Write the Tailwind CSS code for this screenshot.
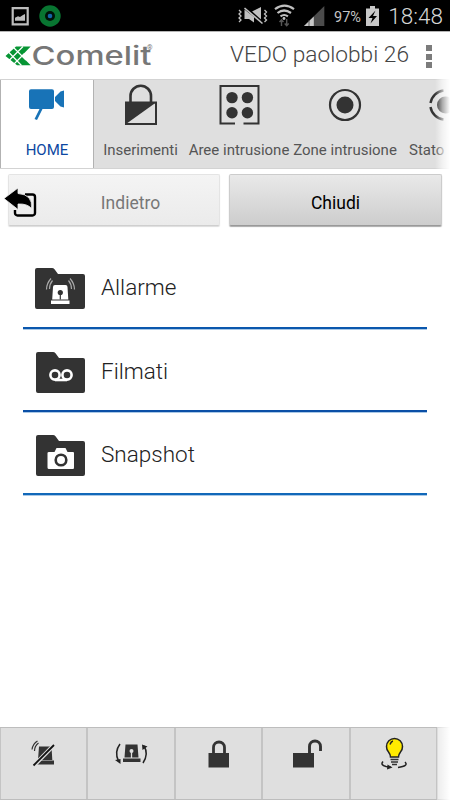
<!DOCTYPE html>
<html lang="it">
<head>
<meta charset="utf-8">
<title>Comelit</title>
<script src="https://cdn.jsdelivr.net/npm/@tailwindcss/browser@4"></script>
</head>
<body class="bg-white">
<div class="relative flex h-[800px] w-[450px] flex-col overflow-hidden bg-white font-['Roboto',sans-serif]">

  <!-- Status bar -->
  <div class="flex h-[31px] shrink-0 items-center justify-between bg-black text-[#c4c4c4]">
    <svg class="h-[31px] w-[70px]" viewBox="0 0 70 31">
      <path d="M12.7 8.2h15v16.2h-15z" fill="none" stroke="#bdbdbd" stroke-width="2.2"/>
      <path d="M15 20.8v-3l3-1.6 2 .9 3-2.1 2-1v6.800z" fill="#bdbdbd"/>
      <circle cx="50" cy="16" r="10.700" fill="#087531"/>
      <circle cx="50" cy="16" r="5" fill="#001208"/>
      <circle cx="50" cy="16" r="2.300" fill="#1565a8"/>
    </svg>
    <div class="flex h-[31px] items-center pr-[7px]">
      <svg class="h-[31px] w-[94px]" viewBox="232 0 94 31">
        <g fill="none" stroke="#c0c0c0" stroke-width="1.300">
          <path d="M239 10l2 2-2 2 2 2-2 2 2 2-2 2M264.500 10l2 2-2 2 2 2-2 2 2 2-2 2"/>
        </g>
        <path d="M244.500 9.500V19h4.500l5 3.500V17zM252 11.500l9-4.500v14z" fill="#c0c0c0"/>
        <path d="M246 7l17 15" stroke="#000" stroke-width="1.200"/>
        <path d="M244.500 8l18 15.500" stroke="#c0c0c0" stroke-width="1.600"/>
        <g fill="none" stroke="#c0c0c0" stroke-width="2.200">
          <path d="M275 9.200q9.500-7 19 0M277.500 13q6.500-5 13.500 0M280.500 16.300q3.700-2.600 7.400 0"/>
        </g>
        <circle cx="284" cy="18.500" r="1.400" fill="#c0c0c0"/>
        <path d="M281.500 26v-5.500M279.500 22l2-2.200 2 2.200M286.700 19v6M284.700 23.500l2 2.200 2-2.200" fill="none" stroke="#555" stroke-width="1.400"/>
        <path d="M304 26L324.300 6v20z" fill="#4c4c4c"/>
        <path d="M304 26l9.800-9.500V26z" fill="#c8c8c8"/>
        <path d="M309 20v6" stroke="#444" stroke-width=".8"/>
      </svg>
      <span class="w-[36px] translate-x-[8px] translate-y-[1.500px] whitespace-nowrap text-[14.500px]">97%</span>
      <svg class="h-[31px] w-[24px]" viewBox="362 0 24 31">
        <path d="M370 6h5v2.500h4V26h-13V8.500h4z" fill="#c8c8c8"/>
        <path d="M375.500 10.500l-7 7.500h4l-2 5.500 6.500-7.500h-4z" fill="#000"/>
      </svg>
      <span class="w-[57px] whitespace-nowrap translate-y-[1px] text-right text-[22.500px] font-light leading-none text-[#d6d6d6]">18:48</span>
    </div>
  </div>

  <!-- Title bar -->
  <header class="flex h-12 shrink-0 items-center border-t border-[#b5b5b5] bg-white">
    <svg class="h-[47px] w-[160px] shrink-0" viewBox="0 32 160 47">
      <path d="M16 46.500h14.700L21.500 56l9.200 9.200H17L5.500 56z" fill="#079534"/>
      <path d="M12 46l14 14M8 51.500l13.500 14M9 60.500l14-14M13.500 64.500l11-11" stroke="#fff" stroke-width="1.200"/>
      <text x="31.500" y="65" textLength="120" lengthAdjust="spacingAndGlyphs" font-family="Inter, sans-serif" font-size="26" font-weight="500" fill="#777">Comelit</text>
      <text x="147" y="49.500" font-family="Roboto, sans-serif" font-size="7" fill="#777">®</text>
    </svg>
    <div class="flex flex-1 justify-end pr-[41px] text-[22.700px] font-light text-[#444]"><h1 class="whitespace-nowrap">VEDO paolobbi 26</h1></div>
    <div class="absolute left-[426px] top-[45px] flex flex-col gap-[2.500px]">
      <i class="size-[6px] bg-[#7c7c7c]"></i><i class="size-[6px] bg-[#7c7c7c]"></i><i class="size-[6px] bg-[#7c7c7c]"></i>
    </div>
  </header>

  <!-- Tabs -->
  <nav class="relative flex h-[90px] shrink-0 overflow-hidden border-y border-[#d3d3d3] bg-[#dfdfdf] text-[15px] text-[#555]">
    <div class="-my-px flex h-[90px] w-[94px] shrink-0 flex-col items-center border border-[#b2b2b2] bg-white text-[#0c47a1]">
      <svg class="h-[58px] w-[92px]" viewBox="1 80 92 58">
        <path d="M31 89.200h21a2 2 0 0 1 2 2V107a2 2 0 0 1-2 2h-9.500l-5.500 11-2.500-1 5-10H31a2 2 0 0 1-2-2V91.200a2 2 0 0 1 2-2zM55 97l5.500-5.500L64 90.500v17l-3.500-1L55 101z" fill="#1873b7"/>
      </svg>
      <span class="leading-[24px]">HOME</span>
    </div>
    <div class="flex w-[93px] shrink-0 flex-col items-center">
      <svg class="h-[58px] w-[93px]" viewBox="94 80 93 58">
        <path d="M130.500 103V96a10 10 0 0 1 20.500 0v7" fill="none" stroke="#333" stroke-width="2.600"/>
        <path d="M126 102.500h30v21.500h-30z" fill="none" stroke="#333" stroke-width="2"/>
        <path d="M126 102.500h30l-30 21.500z" fill="#333"/>
      </svg>
      <span class="whitespace-nowrap leading-[24px]">Inserimenti</span>
    </div>
    <div class="flex w-[104px] shrink-0 flex-col items-center">
      <svg class="h-[58px] w-[104px]" viewBox="187 80 104 58">
        <path d="M235 123.500h-14.500V86h38v37.500H243.500" fill="none" stroke="#333" stroke-width="2"/>
        <g fill="#333"><circle cx="232" cy="97.600" r="5.700"/><circle cx="247.400" cy="97.600" r="5.700"/><circle cx="232" cy="112.700" r="5.700"/><circle cx="247.400" cy="112.700" r="5.700"/></g>
      </svg>
      <span class="whitespace-nowrap leading-[24px]">Aree intrusione</span>
    </div>
    <div class="flex w-[108px] shrink-0 flex-col items-center">
      <svg class="h-[58px] w-[108px]" viewBox="291 80 108 58">
        <circle cx="345" cy="105" r="15" fill="none" stroke="#333" stroke-width="2.200"/><circle cx="345" cy="105" r="8.500" fill="#333"/>
      </svg>
      <span class="whitespace-nowrap leading-[24px]">Zone intrusione</span>
    </div>
    <div class="flex w-[92px] shrink-0 flex-col">
      <svg class="h-[58px] w-[92px]" viewBox="399 80 92 58">
        <path d="M430.500 103a15 15 0 0 1 13-12.500M430.500 107a15 15 0 0 0 13 12.500" fill="none" stroke="#333" stroke-width="2.400"/><circle cx="445.500" cy="105" r="8.500" fill="#333"/>
      </svg>
      <span class="whitespace-nowrap pl-[10px] leading-[24px]">Stato</span>
    </div>
  </nav>
  <div class="absolute left-[435px] top-[78px] h-[92px] w-[15px] bg-linear-to-r from-white/0 via-white/60 to-white"></div>

  <!-- Actions -->
  <div class="flex h-[58px] shrink-0 gap-[9px] px-2 pt-[5px]">
    <button class="relative h-[52px] w-[212px] rounded-[2px] border border-[#e4e4e4] border-b-[#cfcfcf] bg-linear-to-b from-[#f4f4f4] to-[#ebebeb] pl-[33px] pt-[6px] text-[17.500px] text-[#777] shadow-[0_1px_1px_#ddd]">Indietro
      <svg class="absolute -left-[5px] top-[12px] h-[32px] w-[36px]" viewBox="4 187 36 32">
        <path d="M25 194.500h7.500a2.500 2.500 0 0 1 2.500 2.500v16a2.500 2.500 0 0 1-2.500 2.500h-15a2.500 2.500 0 0 1-2.500-2.500v-3" fill="none" stroke="#000" stroke-width="2.400"/>
        <path d="M4 198.500l14-10.500v5.500q15 1 13.500 15-4-5-13.500-4.500v5.500z" fill="#000" stroke="#f2f2f2" stroke-width=".8"/>
      </svg>
    </button>
    <button class="h-[52px] w-[213px] rounded-[2px] border border-[#ccc] border-b-[#999] bg-linear-to-b from-[#e9e9e9] to-[#cdcdcd] pt-[6px] text-[17.500px] text-black shadow-[0_1px_1px_#aaa]">Chiudi</button>
  </div>

  <!-- Folders -->
  <main class="flex-1 px-[23px] pt-[18px] text-[22.500px] font-light text-[#222]">
    <div class="flex h-[84px] items-center gap-[15px] border-b-2 border-[#0a57ad] pl-[11px] pt-[6px] shadow-[0_1px_0_#a9c8e6]">
      <svg class="h-[48px] w-[52px]" viewBox="0 0 52 48">
        <path d="M3 3h15q1.500 0 2.500 1.200L24 9h25q2 0 2 2v31q0 2-2 2H3q-2 0-2-2V5q0-2 2-2z" fill="#333"/>
        <path d="M19 22q0-2 2-2h10.500q2 0 2 2l.8 12.500H18.200zM17 35.500h18.500V39H17z" fill="#fff"/>
        <circle cx="26.300" cy="27.500" r="2.600" fill="#333"/><path d="M26.300 28v6.500" stroke="#333" stroke-width="1.200"/>
        <path d="M15.500 24q0-5 3-8.500M12.500 24.500q0-6 4.500-11M37.500 24q0-5-3-8.500M40.500 24.500q0-6-4.500-11" fill="none" stroke="#aaa" stroke-width="1.200"/>
      </svg>
      <span class="pb-[2px]">Allarme</span>
    </div>
    <div class="flex h-[83px] items-center gap-[14px] border-b-2 border-[#0a4fa6] pl-[12px] pt-[7px] shadow-[0_1px_0_#a9c8e6]">
      <svg class="h-[48px] w-[52px]" viewBox="0 0 52 48">
        <path d="M3 3h15q1.500 0 2.500 1.200L24 9h24q2 0 2 2v31q0 2-2 2H3q-2 0-2-2V5q0-2 2-2z" fill="#333"/>
        <g fill="none" stroke="#fff" stroke-width="2.600"><circle cx="20" cy="26" r="4.600"/><circle cx="32" cy="26" r="4.600"/><path d="M20 31h12"/></g>
      </svg>
      <span class="pb-[2px]">Filmati</span>
    </div>
    <div class="flex h-[83px] items-center gap-[14px] border-b-2 border-[#1168b9] pl-[12px] pt-[7px] shadow-[0_1px_0_#a9c8e6]">
      <svg class="h-[48px] w-[52px]" viewBox="0 0 52 48">
        <path d="M3 3h15q1.500 0 2.500 1.200L24 9h24q2 0 2 2v31q0 2-2 2H3q-2 0-2-2V5q0-2 2-2z" fill="#333"/>
        <path d="M14 20h5.500l2-4h9l2 4H38q1 0 1 1v14.500q0 1.500-1 1.500H14q-1.500 0-1.500-1.500V21q0-1 1.500-1z" fill="#fff"/>
        <circle cx="26" cy="28" r="5.300" fill="#fff" stroke="#333" stroke-width="2.600"/>
      </svg>
      <span class="pb-[2px]">Snapshot</span>
    </div>
  </main>

  <!-- Bottom toolbar -->
  <footer class="flex h-[73px] shrink-0 border-y border-[#bdbdbd] bg-[#dfdfdf]">
    <div class="w-[88px] shrink-0 border-r-2 border-l border-[#c4c4c4]">
      <svg class="h-[56px] w-[85px]" viewBox="1 728 85 56">
        <path d="M39 746.500h12.500l.8 13.500H38zM36.500 760.500h17.500v4H36.500z" fill="#333"/>
        <path d="M34.500 751q0-5 4-8M32 749.500q1-6 5.500-8.500" fill="none" stroke="#333" stroke-width="1.200"/>
        <path d="M34 765.500L54.500 744.500" stroke="#dfdfdf" stroke-width="4"/><path d="M33.500 765.500L54 745" stroke="#111" stroke-width="1.800"/>
      </svg>
    </div>
    <div class="w-[88px] shrink-0 border-r-2 border-[#c4c4c4]">
      <svg class="h-[56px] w-[86px]" viewBox="88 728 86 56">
        <path d="M125.500 744.500h12l1 13h-14zM123 758.500h17.500v3.500H123z" fill="#333"/>
        <circle cx="131.500" cy="751" r="2" fill="#dfdfdf"/><path d="M131.500 752v6" stroke="#dfdfdf" stroke-width="1.300"/>
        <path d="M120 744q-6 8-1.500 17M143 763q6-9 1-17" fill="none" stroke="#222" stroke-width="1.500"/>
        <path d="M115 760l5.500-1v5zM142 744.500l5.500 2-5 3.500z" fill="#222"/>
      </svg>
    </div>
    <div class="w-[87px] shrink-0 border-r-2 border-[#c4c4c4]">
      <svg class="h-[56px] w-[85px]" viewBox="176 728 85 56">
        <path d="M208.500 753H229v14.500h-20.500z" fill="#333"/><path d="M213.500 754v-6.500a5.500 5.500 0 0 1 11 0v6.500" fill="none" stroke="#333" stroke-width="2.800"/>
      </svg>
    </div>
    <div class="w-[88px] shrink-0 border-r-2 border-[#c4c4c4]">
      <svg class="h-[56px] w-[86px]" viewBox="263 728 86 56">
        <path d="M293 753h21v14.500h-21z" fill="#333"/><path d="M309.500 754v-7.500a5.500 5.500 0 0 1 11 0v4.500" fill="none" stroke="#333" stroke-width="2.900"/>
      </svg>
    </div>
    <div class="w-[87px] shrink-0 border-r-2 border-[#c4c4c4]">
      <svg class="h-[56px] w-[85px]" viewBox="351 728 85 56">
        <path d="M390.500 757q0-2.500-2-5-2-2-2-5.500a8 8 0 0 1 16 0q0 3.500-2 5.500-2 2.500-2 5z" fill="#ffea00" stroke="#222" stroke-width="1.500"/>
        <path d="M390 744.500q1-3 3-3.500" fill="none" stroke="#222" stroke-width="1.500"/>
        <path d="M390.500 759.500h8M391 762h7M392 764.500h5" stroke="#333" stroke-width="1.500"/>
        <path d="M383 761.500q-3 3.500 3 5l5 .8M405 762q4 4-7 5.500" fill="none" stroke="#222" stroke-width="1.500"/><path d="M387.500 764.500l5 3-5.500 2z" fill="#222"/>
      </svg>
    </div>
  </footer>
  <div class="absolute left-[437px] top-[726px] h-[74px] w-[13px] bg-linear-to-r from-white/40 to-white"></div>
</div>
</body>
</html>
